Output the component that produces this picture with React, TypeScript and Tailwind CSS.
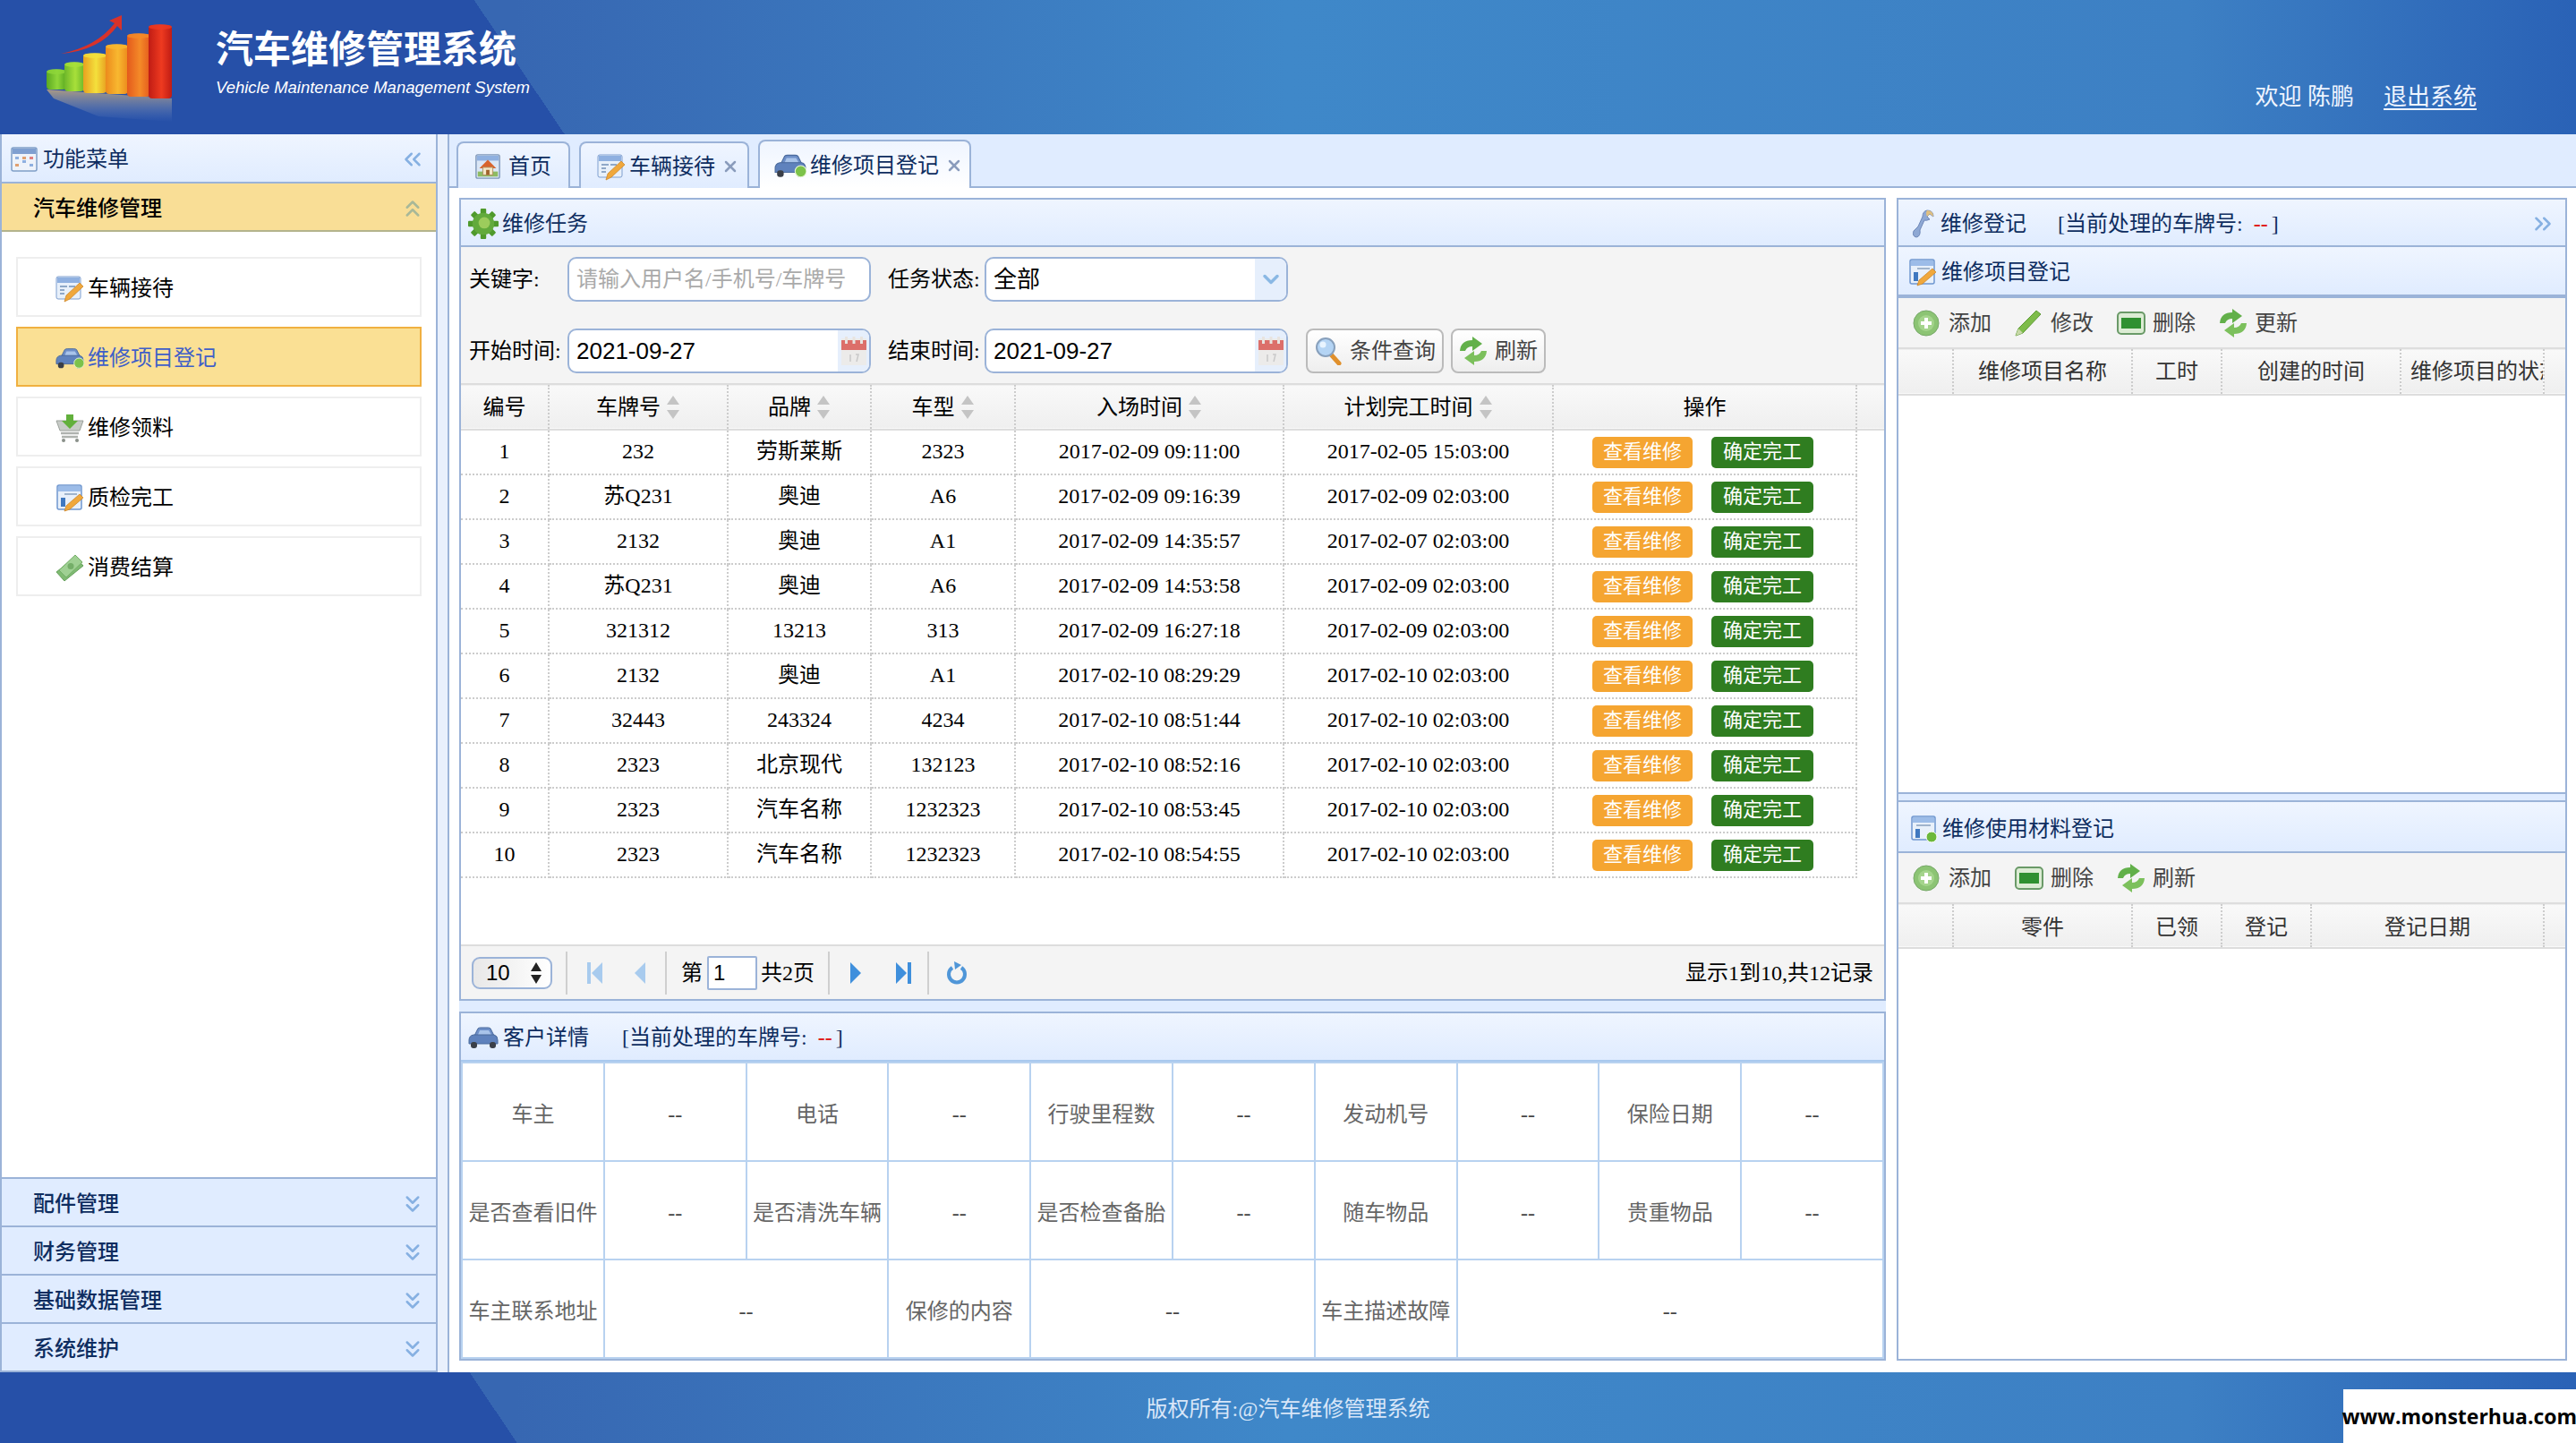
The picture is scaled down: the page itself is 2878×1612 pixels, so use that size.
import { ChevronDown, ChevronsDown, ChevronsLeft, ChevronsRight, ChevronsUp, X } from 'lucide-react';
import type { ReactNode } from 'react';

type IconProps = { className?: string };

function LogoChart() {
  const bars = [
    { x: 2, y: 68, w: 22, h: 22, c: '#8fd63a', d: '#5aa820', id: 'a' },
    { x: 22, y: 60, w: 22, h: 32, c: '#a8e03a', d: '#6eb82a', id: 'b' },
    { x: 43, y: 50, w: 26, h: 44, c: '#f4e03c', d: '#e8a020', id: 'c' },
    { x: 68, y: 40, w: 25, h: 55, c: '#f8b830', d: '#ec8a1c', id: 'd' },
    { x: 92, y: 28, w: 26, h: 70, c: '#f48a28', d: '#e45a1c', id: 'e' },
    { x: 116, y: 18, w: 26, h: 82, c: '#ee3a20', d: '#c01c14', id: 'f' },
  ];
  return (
    <svg viewBox="0 0 144 126" className="h-[126px] w-[144px] shrink-0">
      <defs>
        {bars.map((b) => (
          <linearGradient key={b.id} id={`bar-${b.id}`} x1="0" y1="0" x2="1" y2="0">
            <stop offset="0" stopColor={b.d} />
            <stop offset="0.55" stopColor={b.c} />
            <stop offset="1" stopColor={b.d} />
          </linearGradient>
        ))}
        <linearGradient id="bar-fade" x1="0" y1="0" x2="0" y2="1">
          <stop offset="0" stopColor="#f0c070" stopOpacity="0.65" />
          <stop offset="1" stopColor="#8fa8d8" stopOpacity="0" />
        </linearGradient>
      </defs>
      <path d="M2 90 L142 100 L142 126 L60 120 L10 100 Z" fill="url(#bar-fade)" />
      {bars.map((b) => (
        <g key={b.id}>
          <rect x={b.x} y={b.y} width={b.w} height={b.h} rx="4" fill={`url(#bar-${b.id})`} />
          <ellipse cx={b.x + b.w / 2} cy={b.y + 2} rx={b.w / 2} ry="3" fill={b.c} opacity="0.8" />
        </g>
      ))}
      <path d="M18 50 Q58 42 78 16 L72 13 L86 7 L86 24 L81 19 Q62 46 18 50 Z" fill="#d8322a" />
    </svg>
  );
}

function FormIcon({ className }: IconProps) {
  return (
    <svg viewBox="0 0 32 32" className={className}>
      <rect x="1" y="3" width="27" height="25" rx="2" fill="#e8f0fa" stroke="#7f9fd0" />
      <rect x="2" y="4" width="25" height="6" fill="#8fb0e0" />
      <path d="M5 14h8M5 18h5M5 22h5M15 14h7" stroke="#8fa8c8" strokeWidth="2" />
      <path d="M27 10 L31 14 L16 28 L10 31 L12 24 Z" fill="#f0a83c" stroke="#c88020" strokeWidth="0.7" />
    </svg>
  );
}

function ReportIcon({ className }: IconProps) {
  return (
    <svg viewBox="0 0 32 32" className={className}>
      <rect x="2" y="2" width="27" height="27" rx="2" fill="#e8f0fa" stroke="#6f97d0" strokeWidth="1.5" />
      <rect x="3" y="3" width="25" height="6" fill="#9cbce8" />
      <rect x="6" y="16" width="5" height="10" fill="#3f78c0" />
      <path d="M10 12h14" stroke="#a0b4cc" strokeWidth="2" />
      <path d="M27 12 L31 16 L16 29 L10 31 L12 25 Z" fill="#f0a83c" stroke="#c88020" strokeWidth="0.7" />
    </svg>
  );
}

function MaterialIcon({ className }: IconProps) {
  return (
    <svg viewBox="0 0 32 32" className={className}>
      <rect x="2" y="2" width="26" height="26" rx="2" fill="#e8f0fa" stroke="#6f97d0" strokeWidth="1.5" />
      <rect x="3" y="3" width="24" height="6" fill="#9cbce8" />
      <path d="M7 12h16" stroke="#a0b4cc" strokeWidth="2" />
      <rect x="6" y="16" width="5" height="10" fill="#3f78c0" />
      <circle cx="24" cy="25" r="6" fill="#6cb83c" stroke="#fff" />
    </svg>
  );
}

function CarIcon({ className, dot }: IconProps & { dot?: boolean }) {
  return (
    <svg viewBox="0 0 34 26" className={className}>
      <path d="M7 11 L11 3 Q12 2 14 2 H22 Q24 2 25 3 L29 11 Z" fill="#6e8fc8" stroke="#4a6a9c" />
      <path d="M11 10 L13 5 H23 L26 10 Z" fill="#a9c4ea" />
      <path d="M1 16 Q1 11 6 10 H29 Q33 11 33 16 V20 H1 Z" fill="#5f82bd" stroke="#4a6a9c" />
      <rect x="3" y="18" width="7" height="7" rx="3" fill="#3a3f48" />
      <rect x="24" y="18" width="7" height="7" rx="3" fill="#3a3f48" />
      {dot && <circle cx="28" cy="19" r="6" fill="#7cc24a" stroke="#e8f5d8" />}
    </svg>
  );
}

function GearIcon({ className }: IconProps) {
  return (
    <svg viewBox="0 0 32 32" className={className}>
      <g fill="#4f9a2c">
        {[0, 45, 90, 135, 180, 225, 270, 315].map((a) => (
          <rect key={a} x="13" y="0" width="6" height="7" rx="1" transform={`rotate(${a} 16 16)`} />
        ))}
      </g>
      <circle cx="16" cy="16" r="11.5" fill="#62aa3c" />
      <circle cx="17" cy="15" r="6" fill="#9ccc5c" />
    </svg>
  );
}

function CartIcon({ className }: IconProps) {
  return (
    <svg viewBox="0 0 32 32" className={className}>
      <path d="M1 8 H31 L27 19 H5 Z" fill="#c8ccc8" stroke="#9aa09a" />
      <path d="M6 22 H26 M7 26 H25" stroke="#aeb2ae" strokeWidth="2.5" />
      <circle cx="9" cy="30" r="2" fill="#8a908a" />
      <circle cx="24" cy="30" r="2" fill="#8a908a" />
      <path d="M12 1 H20 V8 H25 L16 17 L7 8 H12 Z" fill="#62b03c" />
    </svg>
  );
}

function MoneyIcon({ className }: IconProps) {
  return (
    <svg viewBox="0 0 32 32" className={className}>
      <path d="M1 21 L22 4 L31 14 L10 31 Z" fill="#7fbb72" stroke="#66a05c" />
      <path d="M4 19 L22 2 L30 10 L12 27 Z" fill="#9fd093" stroke="#74ae68" />
      <circle cx="17" cy="14.5" r="3.5" fill="#74ae68" />
    </svg>
  );
}

function HomeIcon({ className }: IconProps) {
  return (
    <svg viewBox="0 0 32 32" className={className}>
      <rect x="2" y="2" width="28" height="28" rx="2" fill="#dbe7f6" stroke="#7f97b8" strokeWidth="1.5" />
      <rect x="3" y="3" width="26" height="6" fill="#8fb0e0" />
      <rect x="4" y="22" width="24" height="6" fill="#8dbb62" />
      <path d="M6 18 L16 8 L26 18 Z" fill="#d8642c" />
      <rect x="10" y="17" width="12" height="9" fill="#f4e8c8" stroke="#b09060" />
      <rect x="14" y="20" width="4" height="6" fill="#a0622c" />
    </svg>
  );
}

function MenuIcon({ className }: IconProps) {
  return (
    <svg viewBox="0 0 30 30" className={className}>
      <rect x="1" y="2" width="28" height="26" rx="2" fill="#eef3fa" stroke="#7f9fc8" strokeWidth="1.5" />
      <rect x="2" y="3" width="26" height="6" fill="#7f9fd0" />
      <g fill="#8fb0e0">
        <rect x="5" y="12" width="4" height="3" />
        <rect x="5" y="20" width="4" height="3" fill="#e0a070" />
        <rect x="13" y="12" width="4" height="3" fill="#e0a070" />
        <rect x="13" y="16" width="4" height="3" />
        <rect x="21" y="12" width="4" height="3" fill="#e08080" />
        <rect x="21" y="20" width="4" height="3" />
      </g>
    </svg>
  );
}

function WrenchIcon({ className }: IconProps) {
  return (
    <svg viewBox="0 0 26 34" className={className}>
      <path d="M17 2 Q24 2 24 9 L20 6 L17 9 L20 12 Q16 14 14 13 L9 24 Q10 31 5 32 Q0 31 2 25 L7 20 L12 9 Q12 3 17 2 Z" fill="#8ea8d4" stroke="#6f88b8" />
      <path d="M17 2 Q24 2 24 9 L20 6 L17 9 Q15 5 17 2 Z" fill="#e0c080" />
    </svg>
  );
}

function SearchIcon({ className }: IconProps) {
  return (
    <svg viewBox="0 0 32 32" className={className}>
      <path d="M19 20 L28 30" stroke="#e0902c" strokeWidth="5" strokeLinecap="round" />
      <circle cx="13" cy="12" r="10" fill="#b4d4f4" stroke="#88a0bc" strokeWidth="2" />
      <circle cx="10" cy="9" r="3.5" fill="#e8f4ff" />
    </svg>
  );
}

function RefreshIcon({ className }: IconProps) {
  return (
    <svg viewBox="0 0 32 32" className={className}>
      <path d="M1 16 Q2 4 15 4 L15 0 L26 8 L15 16 L15 11 Q9 11 7 16 Z" fill="#62b04a" />
      <path d="M31 16 Q30 28 17 28 L17 32 L6 24 L17 16 L17 21 Q23 21 25 16 Z" fill="#7cc05c" />
    </svg>
  );
}

function AddIcon({ className }: IconProps) {
  return (
    <svg viewBox="0 0 30 30" className={className}>
      <circle cx="15" cy="15" r="14" fill="#8cc474" stroke="#76a868" />
      <circle cx="15" cy="15" r="9" fill="#a4d48c" />
      <path d="M15 9 V21 M9 15 H21" stroke="#fff" strokeWidth="4" />
    </svg>
  );
}

function EditIcon({ className }: IconProps) {
  return (
    <svg viewBox="0 0 30 30" className={className}>
      <path d="M24 1 L29 5 L9 26 L1 29 L4 21 Z" fill="#7ebc4a" stroke="#5c9a34" />
      <path d="M1 29 L4 21 L9 26 Z" fill="#c8d8a8" />
    </svg>
  );
}

function DeleteIcon({ className }: IconProps) {
  return (
    <svg viewBox="0 0 32 28" className={className}>
      <rect x="1" y="2" width="30" height="24" rx="4" fill="#dcecd4" stroke="#6a9a68" strokeWidth="2" />
      <rect x="5" y="8" width="22" height="12" fill="#2f9030" />
    </svg>
  );
}

function CalendarIcon({ className }: IconProps) {
  return (
    <svg viewBox="0 0 28 32" className={className}>
      <rect x="0" y="2" width="28" height="30" fill="#ecebea" />
      <rect x="0" y="4" width="28" height="11" fill="#dc6f6a" />
      <path d="M4 0h3v8h-3zM12.5 0h3v8h-3zM21 0h3v8h-3z" fill="#e8e4e0" />
      <path d="M10 20 V28 M16 20 h3 l-2 8" stroke="#c9c9c9" strokeWidth="1.5" fill="none" />
    </svg>
  );
}

function SortIcon() {
  return (
    <svg viewBox="0 0 16 30" className="h-[30px] w-[16px]">
      <path d="M8 2 L15 12 H1 Z M1 18 H15 L8 28 Z" fill="#c4c4c4" />
    </svg>
  );
}

function PanelTitle({ children, className }: { children: ReactNode; className: string }) {
  return (
    <div className={`flex items-center border-b-2 border-[#9bb3d8] bg-gradient-to-b from-[#eff5ff] to-[#e0ecff] pt-[2px] text-[#0e2d5f] ${className}`}>
      {children}
    </div>
  );
}

function AccordionHead({ title }: { title: string }) {
  return (
    <div className="flex h-[54px] items-center justify-between border-b-2 border-[#9bb3d8] bg-[#e0ecff] pl-[35px] pr-[11px] pt-[3px] font-medium text-[#0e2d5f]">
      <span>{title}</span>
      <ChevronsDown className="h-[30px] w-[30px] text-[#86b0e2]" strokeWidth={2} />
    </div>
  );
}

function Tab({ icon, title, active, close, className }: { icon: ReactNode; title: string; active?: boolean; close?: boolean; className: string }) {
  return (
    <div className={`flex items-center rounded-t-[8px] border-2 border-[#9bb3d8] pt-[2px] ${active ? 'h-[54px] border-b-0 bg-gradient-to-b from-[#eff5ff] to-white text-[#0e2d5f]' : 'h-[52px] border-b-0 bg-gradient-to-b from-[#eff5ff] to-[#e0ecff] text-[#0e2d5f]'} ${className}`}>
      {icon}
      <span>{title}</span>
      {close && <X className="ml-[3px] h-[20px] w-[20px] text-[#8a9cbc]" strokeWidth={3} />}
    </div>
  );
}

function SideItem({ icon, title, active }: { icon: ReactNode; title: string; active?: boolean }) {
  return (
    <div className={`flex h-[67px] items-center gap-[4px] pl-[42px] pt-[3px] ${active ? 'border-2 border-[#f0b040] bg-[#fae094] text-[#3f5fc8]' : 'border-2 border-[#eeeeee] bg-white text-black'}`}>
      {icon}
      <span>{title}</span>
    </div>
  );
}

function TableInput({ text, placeholder, addon }: { text?: string; placeholder?: string; addon?: ReactNode }) {
  return (
    <div className="flex h-[50px] w-[339px] items-stretch overflow-hidden rounded-[10px] border-2 border-[#9bb3d8] bg-white">
      <div className={`flex flex-1 items-center pl-[8px] ${placeholder ? 'text-[#aaaaaa]' : 'text-black'}`}>
        {placeholder ?? <span className="[font-family:'Liberation_Sans','Noto_Sans_CJK_SC',sans-serif] text-[26px]">{text}</span>}
      </div>
      {addon && <div className="flex w-[35px] items-center justify-center bg-[#e6effc]">{addon}</div>}
    </div>
  );
}

function ToolButton({ icon, title, className }: { icon: ReactNode; title: string; className: string }) {
  return (
    <div className={`flex h-[50px] items-center justify-center gap-[8px] rounded-[8px] border-2 border-[#bbbbbb] bg-gradient-to-b from-white to-[#eeeeee] text-[#444444] ${className}`}>
      {icon}
      <span>{title}</span>
    </div>
  );
}

function HeaderCell({ title, sort, className }: { title: string; sort?: boolean; className?: string }) {
  return (
    <th className={`border-r-2 border-dotted border-[#cccccc] font-normal ${className ?? ''}`}>
      <div className="flex items-center justify-center gap-[6px] overflow-hidden whitespace-nowrap">
        <span>{title}</span>
        {sort && <SortIcon />}
      </div>
    </th>
  );
}

function MiniAction({ icon, title, className }: { icon: ReactNode; title: string; className: string }) {
  return (
    <div className={`flex items-center pt-[1px] text-[#444444] ${className}`}>
      {icon}
      <span>{title}</span>
    </div>
  );
}

function PlateLabel() {
  return (
    <span>
      [当前处理的车牌号:
      <span className="ml-[12px] mr-[4px] font-bold text-[#e02020]">--</span>]
    </span>
  );
}

function PagerSep() {
  return <div className="h-[48px] w-[2px] bg-[#cfcfcf]" />;
}

const rows = [
  ['1', '232', '劳斯莱斯', '2323', '2017-02-09 09:11:00', '2017-02-05 15:03:00'],
  ['2', '苏Q231', '奥迪', 'A6', '2017-02-09 09:16:39', '2017-02-09 02:03:00'],
  ['3', '2132', '奥迪', 'A1', '2017-02-09 14:35:57', '2017-02-07 02:03:00'],
  ['4', '苏Q231', '奥迪', 'A6', '2017-02-09 14:53:58', '2017-02-09 02:03:00'],
  ['5', '321312', '13213', '313', '2017-02-09 16:27:18', '2017-02-09 02:03:00'],
  ['6', '2132', '奥迪', 'A1', '2017-02-10 08:29:29', '2017-02-10 02:03:00'],
  ['7', '32443', '243324', '4234', '2017-02-10 08:51:44', '2017-02-10 02:03:00'],
  ['8', '2323', '北京现代', '132123', '2017-02-10 08:52:16', '2017-02-10 02:03:00'],
  ['9', '2323', '汽车名称', '1232323', '2017-02-10 08:53:45', '2017-02-10 02:03:00'],
  ['10', '2323', '汽车名称', '1232323', '2017-02-10 08:54:55', '2017-02-10 02:03:00'],
];

const detailRows = [
  [['车主', 1, 1], ['--', 1, 0], ['电话', 1, 1], ['--', 1, 0], ['行驶里程数', 1, 1], ['--', 1, 0], ['发动机号', 1, 1], ['--', 1, 0], ['保险日期', 1, 1], ['--', 1, 0]],
  [['是否查看旧件', 1, 1], ['--', 1, 0], ['是否清洗车辆', 1, 1], ['--', 1, 0], ['是否检查备胎', 1, 1], ['--', 1, 0], ['随车物品', 1, 1], ['--', 1, 0], ['贵重物品', 1, 1], ['--', 1, 0]],
  [['车主联系地址', 1, 1], ['--', 2, 0], ['保修的内容', 1, 1], ['--', 2, 0], ['车主描述故障', 1, 1], ['--', 3, 0]],
] as [string, number, number][][];

function App() {
  return (
    <div className="flex h-[1612px] w-[2878px] flex-col overflow-hidden bg-white text-[24px] leading-none text-black [font-family:'Liberation_Serif','Noto_Sans_CJK_SC',serif]">
      <header className="flex h-[150px] shrink-0 items-start bg-[linear-gradient(56deg,#2650a8_523px,transparent_523px),linear-gradient(90deg,#3767b2_20%,#3f88c9_50%,#3d80c4_85%,#2a62b6)] pl-[50px]">
        <div className="pt-[10px]">
          <LogoChart />
        </div>
        <div className="ml-[47px] flex flex-col pt-[35px] text-white [font-family:'Liberation_Sans','Noto_Sans_CJK_SC',sans-serif]">
          <span className="text-[42px] font-bold">汽车维修管理系统</span>
          <span className="mt-[12px] text-[18.5px] italic">Vehicle Maintenance Management System</span>
        </div>
        <div className="ml-auto flex gap-[33px] pr-[111px] pt-[96px] text-[26px] text-[#eef4ff]">
          <span>欢迎 陈鹏</span>
          <span className="underline underline-offset-4">退出系统</span>
        </div>
      </header>

      <main className="flex min-h-0 flex-1">
        <aside className="flex w-[489px] shrink-0 flex-col border-x-2 border-[#9bb3d8]">
          <PanelTitle className="h-[55px] justify-between pl-[10px] pr-[11px]">
            <div className="flex items-center gap-[6px]">
              <MenuIcon className="h-[30px] w-[30px]" />
              <span>功能菜单</span>
            </div>
            <ChevronsLeft className="h-[30px] w-[30px] text-[#86b0e2]" strokeWidth={2} />
          </PanelTitle>
          <div className="flex h-[54px] items-center justify-between border-b-2 border-[#b4b48c] bg-[#f9de96] pl-[35px] pr-[11px] pt-[3px] font-medium">
            <span>汽车维修管理</span>
            <ChevronsUp className="h-[30px] w-[30px] text-[#a8b898]" strokeWidth={2} />
          </div>
          <div className="flex flex-1 flex-col gap-[11px] border-b-2 border-[#9bb3d8] bg-white px-[16px] pt-[28px]">
            <SideItem icon={<FormIcon className="h-[32px] w-[32px]" />} title="车辆接待" />
            <SideItem icon={<CarIcon className="h-[28px] w-[32px]" dot />} title="维修项目登记" active />
            <SideItem icon={<CartIcon className="h-[32px] w-[32px]" />} title="维修领料" />
            <SideItem icon={<ReportIcon className="h-[32px] w-[32px]" />} title="质检完工" />
            <SideItem icon={<MoneyIcon className="h-[32px] w-[32px]" />} title="消费结算" />
          </div>
          <AccordionHead title="配件管理" />
          <AccordionHead title="财务管理" />
          <AccordionHead title="基础数据管理" />
          <AccordionHead title="系统维护" />
        </aside>

        <div className="w-[11px] shrink-0 bg-[#e9f0fc]" />

        <section className="flex min-w-0 flex-1 flex-col border-l-2 border-[#9bb3d8]">
          <div className="flex h-[60px] shrink-0 items-end gap-[10px] border-b-2 border-[#9bb3d8] bg-[#e0ecff] pl-[8px]">
            <Tab className="-mb-[2px] w-[127px] gap-[8px] pl-[18px]" icon={<HomeIcon className="h-[30px] w-[30px]" />} title="首页" />
            <Tab className="-mb-[2px] w-[190px] gap-[4px] pl-[18px]" icon={<FormIcon className="h-[32px] w-[32px]" />} title="车辆接待" close />
            <Tab className="-mb-[2px] w-[238px] gap-[4px] pl-[16px]" icon={<CarIcon className="h-[28px] w-[36px]" dot />} title="维修项目登记" active close />
          </div>

          <div className="flex min-h-0 flex-1 gap-[12px] bg-white pb-[13px] pl-[11px] pr-[10px] pt-[11px]">
            <div className="flex w-[1594px] shrink-0 flex-col">
              <div className="flex h-[897px] shrink-0 flex-col border-2 border-[#9bb3d8]">
                <PanelTitle className="h-[53px] shrink-0 gap-[4px] pl-[8px]">
                  <GearIcon className="h-[34px] w-[34px]" />
                  <span>维修任务</span>
                </PanelTitle>
                <div className="flex h-[152px] shrink-0 flex-col gap-[30px] bg-[#f4f4f4] pt-[11px]">
                  <div className="flex items-center">
                    <span className="w-[119px] pl-[9px]">关键字:</span>
                    <TableInput placeholder="请输入用户名/手机号/车牌号" />
                    <span className="ml-[19px] w-[108px]">任务状态:</span>
                    <TableInput text="全部" addon={<ChevronDown className="h-[28px] w-[28px] text-[#8ab8e4]" strokeWidth={3} />} />
                  </div>
                  <div className="flex items-center">
                    <span className="w-[119px] pl-[9px]">开始时间:</span>
                    <TableInput text="2021-09-27" addon={<CalendarIcon className="h-[32px] w-[28px]" />} />
                    <span className="ml-[19px] w-[108px]">结束时间:</span>
                    <TableInput text="2021-09-27" addon={<CalendarIcon className="h-[32px] w-[28px]" />} />
                    <ToolButton className="ml-[20px] w-[154px]" icon={<SearchIcon className="h-[32px] w-[32px]" />} title="条件查询" />
                    <ToolButton className="ml-[8px] w-[106px]" icon={<RefreshIcon className="h-[32px] w-[32px]" />} title="刷新" />
                  </div>
                </div>
                <table className="w-full table-fixed border-collapse">
                  <colgroup>
                    <col className="w-[98px]" />
                    <col className="w-[200px]" />
                    <col className="w-[160px]" />
                    <col className="w-[161px]" />
                    <col className="w-[300px]" />
                    <col className="w-[301px]" />
                    <col className="w-[339px]" />
                    <col />
                  </colgroup>
                  <thead>
                    <tr className="h-[51px] border-y-2 border-[#dddddd] bg-gradient-to-b from-[#f9f9f9] to-[#efefef]">
                      <HeaderCell title="编号" />
                      <HeaderCell title="车牌号" sort />
                      <HeaderCell title="品牌" sort />
                      <HeaderCell title="车型" sort />
                      <HeaderCell title="入场时间" sort />
                      <HeaderCell title="计划完工时间" sort />
                      <HeaderCell title="操作" />
                      <th />
                    </tr>
                  </thead>
                  <tbody>
                    {rows.map((row) => (
                      <tr key={row[0]} className="h-[50px]">
                        {row.map((cell, i) => (
                          <td key={i} className="border-r-2 border-b-2 border-dotted border-[#cccccc] pb-[2px] text-center">
                            {cell}
                          </td>
                        ))}
                        <td className="border-r-2 border-b-2 border-dotted border-[#cccccc]">
                          <div className="flex justify-center gap-[21px] pr-[4px] text-[22px] text-white">
                            <span className="flex h-[35px] w-[112px] items-center justify-center rounded-[5px] bg-[#f5a531]">查看维修</span>
                            <span className="flex h-[35px] w-[114px] items-center justify-center rounded-[5px] bg-[#2f7d20]">确定完工</span>
                          </div>
                        </td>
                        <td />
                      </tr>
                    ))}
                  </tbody>
                </table>
                <div className="flex-1 bg-white" />
                <div className="flex h-[61px] shrink-0 items-center border-t-2 border-[#dddddd] bg-[#f4f4f4] pl-[12px] pr-[12px]">
                  <div className="flex h-[36px] w-[90px] items-center justify-between rounded-[9px] border-2 border-[#9bb3d8] bg-gradient-to-r from-[#e8e8e8] to-white pl-[14px] pr-[10px] [font-family:'Liberation_Sans',sans-serif]">
                    <span>10</span>
                    <svg viewBox="0 0 12 28" className="h-[28px] w-[12px]">
                      <path d="M6 2 L12 12 H0 Z M0 16 H12 L6 26 Z" fill="#222222" />
                    </svg>
                  </div>
                  <div className="ml-[15px]"><PagerSep /></div>
                  <svg viewBox="0 0 20 26" className="ml-[21px] h-[26px] w-[20px]">
                    <path d="M1 1 H5 V25 H1 Z M18 1 V25 L6 13 Z" fill="#a8cbee" />
                  </svg>
                  <svg viewBox="0 0 14 26" className="ml-[33px] h-[26px] w-[14px]">
                    <path d="M13 1 V25 L1 13 Z" fill="#a8cbee" />
                  </svg>
                  <div className="ml-[21px]"><PagerSep /></div>
                  <span className="ml-[16px]">第</span>
                  <div className="ml-[5px] flex h-[38px] w-[56px] items-center rounded-[2px] border-2 border-[#9bb3d8] bg-white pl-[5px] [font-family:'Liberation_Sans',sans-serif]">1</div>
                  <span className="ml-[4px]">共2页</span>
                  <div className="ml-[15px]"><PagerSep /></div>
                  <svg viewBox="0 0 14 26" className="ml-[22px] h-[26px] w-[14px]">
                    <path d="M1 1 V25 L13 13 Z" fill="#3f8fdc" />
                  </svg>
                  <svg viewBox="0 0 20 26" className="ml-[36px] h-[26px] w-[20px]">
                    <path d="M2 1 V25 L14 13 Z M15 1 H19 V25 H15 Z" fill="#3f8fdc" />
                  </svg>
                  <div className="ml-[17px]"><PagerSep /></div>
                  <svg viewBox="0 0 24 28" className="ml-[19px] h-[28px] w-[24px]">
                    <path d="M7 8 A9 9 0 1 0 17 8" fill="none" stroke="#4f96d8" strokeWidth="4" />
                    <path d="M9 1 L17 5 L10 10 Z" fill="#4f96d8" />
                  </svg>
                  <span className="ml-auto">显示1到10,共12记录</span>
                </div>
              </div>

              <div className="h-[12px] shrink-0 bg-[#e0ecff]" />

              <div className="flex min-h-0 flex-1 flex-col border-2 border-[#9bb3d8]">
                <PanelTitle className="h-[54px] shrink-0 gap-[5px] border-[#a8c8ee] pl-[8px]">
                  <CarIcon className="h-[28px] w-[34px]" />
                  <span>客户详情</span>
                  <span className="ml-[32px]">
                    <PlateLabel />
                  </span>
                </PanelTitle>
                <table className="w-full flex-1 table-fixed border-collapse">
                  <tbody>
                    {detailRows.map((cells, r) => (
                      <tr key={r} className="h-[110px]">
                        {cells.map(([text, span, isLabel], i) => (
                          <td key={i} colSpan={span} className={`border-2 border-[#b8d2f0] pt-[5px] text-center ${isLabel ? 'text-[#666666]' : 'text-[#444444]'}`}>
                            {text}
                          </td>
                        ))}
                      </tr>
                    ))}
                  </tbody>
                </table>
              </div>
            </div>

            <div className="flex min-w-0 flex-1 flex-col border-2 border-[#9bb3d8]">
              <PanelTitle className="h-[53px] shrink-0 justify-between pl-[15px] pr-[10px]">
                <div className="flex items-center">
                  <WrenchIcon className="h-[34px] w-[26px]" />
                  <span className="ml-[6px]">维修登记</span>
                  <span className="ml-[35px]">
                    <PlateLabel />
                  </span>
                </div>
                <ChevronsRight className="h-[30px] w-[30px] text-[#86b0e2]" strokeWidth={2} />
              </PanelTitle>
              <PanelTitle className="h-[57px] shrink-0 gap-[5px] border-b-4 pl-[11px]">
                <ReportIcon className="h-[32px] w-[32px]" />
                <span>维修项目登记</span>
              </PanelTitle>
              <div className="flex h-[55px] shrink-0 items-center bg-[#f4f4f4] pl-[16px]">
                <MiniAction className="w-[114px] gap-[10px]" icon={<AddIcon className="h-[30px] w-[30px]" />} title="添加" />
                <MiniAction className="w-[114px] gap-[10px]" icon={<EditIcon className="h-[30px] w-[30px]" />} title="修改" />
                <MiniAction className="w-[114px] gap-[8px]" icon={<DeleteIcon className="h-[28px] w-[32px]" />} title="删除" />
                <MiniAction className="w-[114px] gap-[8px]" icon={<RefreshIcon className="h-[32px] w-[32px]" />} title="更新" />
              </div>
              <table className="w-full table-fixed border-collapse">
                <colgroup>
                  <col className="w-[61px]" />
                  <col className="w-[200px]" />
                  <col className="w-[100px]" />
                  <col className="w-[200px]" />
                  <col className="w-[160px]" />
                  <col />
                </colgroup>
                <thead>
                  <tr className="h-[52px] border-y-2 border-[#dddddd] bg-gradient-to-b from-[#f9f9f9] to-[#efefef] text-[#333333]">
                    <HeaderCell title="" />
                    <HeaderCell title="维修项目名称" />
                    <HeaderCell title="工时" />
                    <HeaderCell title="创建的时间" />
                    <th className="overflow-hidden whitespace-nowrap border-r-2 border-dotted border-[#cccccc] pl-[10px] text-left font-normal">维修项目的状态</th>
                    <th />
                  </tr>
                </thead>
              </table>
              <div className="flex-1 bg-white" />
              <div className="h-[11px] shrink-0 border-y-2 border-[#9bb3d8] bg-[#e0ecff]" />
              <PanelTitle className="h-[57px] shrink-0 gap-[4px] pl-[13px] pt-[4px]">
                <MaterialIcon className="h-[32px] w-[32px]" />
                <span>维修使用材料登记</span>
              </PanelTitle>
              <div className="flex h-[55px] shrink-0 items-center bg-[#f4f4f4] pl-[16px]">
                <MiniAction className="w-[114px] gap-[10px]" icon={<AddIcon className="h-[30px] w-[30px]" />} title="添加" />
                <MiniAction className="w-[114px] gap-[8px]" icon={<DeleteIcon className="h-[28px] w-[32px]" />} title="删除" />
                <MiniAction className="w-[114px] gap-[8px]" icon={<RefreshIcon className="h-[32px] w-[32px]" />} title="刷新" />
              </div>
              <table className="w-full table-fixed border-collapse">
                <colgroup>
                  <col className="w-[61px]" />
                  <col className="w-[200px]" />
                  <col className="w-[100px]" />
                  <col className="w-[100px]" />
                  <col className="w-[260px]" />
                  <col />
                </colgroup>
                <thead>
                  <tr className="h-[50px] border-y-2 border-[#dddddd] bg-gradient-to-b from-[#f9f9f9] to-[#efefef] text-[#333333]">
                    <HeaderCell title="" />
                    <HeaderCell className="pt-[3px]" title="零件" />
                    <HeaderCell className="pt-[3px]" title="已领" />
                    <HeaderCell className="pt-[3px]" title="登记" />
                    <HeaderCell className="pt-[3px]" title="登记日期" />
                    <th />
                  </tr>
                </thead>
              </table>
              <div className="h-[458px] shrink-0 bg-white" />
            </div>
          </div>
        </section>
      </main>

      <footer className="flex h-[79px] shrink-0 items-stretch bg-[linear-gradient(56deg,#2650a8_479px,transparent_479px),linear-gradient(90deg,#3767b2_20%,#3f88c9_50%,#3d80c4_85%,#2a62b6)] text-[#d8e6f8]">
        <div className="w-[260px] shrink-0" />
        <div className="flex flex-1 items-center justify-center pt-[2px]">
          <span>版权所有:@汽车维修管理系统</span>
        </div>
        <div className="mt-[19px] flex w-[260px] shrink-0 items-center justify-center bg-white text-[23px] font-bold text-black [font-family:'Open_Sans',sans-serif]">
          www.monsterhua.com
        </div>
      </footer>
    </div>
  );
}

export default App;
